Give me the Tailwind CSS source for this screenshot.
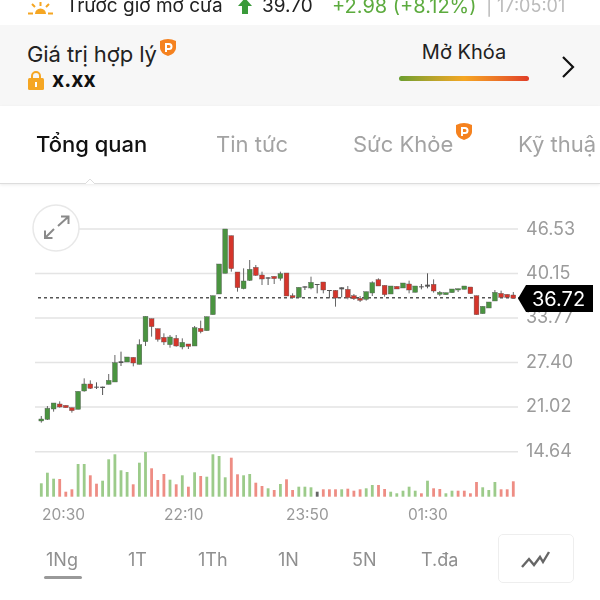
<!DOCTYPE html>
<html lang="vi">
<head>
<meta charset="utf-8">
<script src="https://cdn.jsdelivr.net/npm/@tailwindcss/browser@4"></script>
</head>
<body class="bg-white font-['Inter','Noto_Sans',sans-serif]">
<div class="w-[600px] h-[600px] overflow-hidden flex flex-col blur-[0.4px]">

  <div class="h-[25px] shrink-0 overflow-hidden flex items-center pl-[27px] text-[19px] leading-none whitespace-nowrap -translate-y-[7px]">
    <svg width="26" height="20" viewBox="0 0 26 20" class="shrink-0 translate-y-[4px]">
      <path d="M8 14a5.500 5.500 0 0 1 11 0z" fill="#f5a623"/>
      <rect x="1" y="12.500" width="5" height="2" fill="#f5a623"/><rect x="21" y="12.500" width="5" height="2" fill="#f5a623"/>
      <path d="M5 4l3 3M22 4l-3 3M13.500 2v4" stroke="#f5a623" stroke-width="2"/>
    </svg>
    <span class="ml-[13px] w-[160px] text-[#222]">Trước giờ mở cửa</span>
    <svg width="16" height="18" viewBox="0 0 16 18" class="shrink-0 ml-[11px]"><path d="M8 1l7 8h-4v8H5V9H1z" fill="#3a9a3a"/></svg>
    <span class="ml-[9px] text-[#222] w-[70px]">39.70</span>
    <span class="text-[#5cab3e] w-[154px] text-[20px]">+2.98 (+8.12%)</span>
    <span class="text-[#bbb] w-[11px]">|</span>
    <span class="text-[#bbb] text-[18px]">17:05:01</span>
  </div>

  <div class="h-[81px] shrink-0 bg-[#f7f7f7] flex pl-[27px] pr-[24px]">
    <div class="w-[372px] pt-[14px]">
      <div class="flex items-start h-[30px]">
        <span class="text-[22px] leading-[30px] text-[#222] -tracking-[0.1px]">Giá trị hợp lý</span>
        <svg width="18" height="19" viewBox="0 0 18 19" class="ml-[2px] -mt-[1px]"><path d="M1 3q8-4 16 0v7q0 5-8 8-8-3-8-8z" fill="#f5821f"/><path d="M7 14V6h3a2.500 2.500 0 0 1 0 5H7" fill="none" stroke="#fff" stroke-width="2"/></svg>
      </div>
      <div class="flex items-center h-[24px] mt-[-1px]">
        <svg width="18" height="21" viewBox="0 0 18 21" class="shrink-0"><path d="M5 9V6a4 4 0 0 1 8 0v3" fill="none" stroke="#f5a623" stroke-width="2"/><rect x="1" y="8" width="16" height="12" rx="1.500" fill="#f5a623"/><rect x="8" y="12" width="2" height="5" fill="#fff"/></svg>
        <span class="ml-[7px] text-[21px] font-bold text-[#111]">x.xx</span>
      </div>
    </div>
    <div class="w-[130px] pt-[14px] flex flex-col items-center">
      <span class="text-[20px] leading-[26px] font-normal text-[#222]">Mở Khóa</span>
      <div class="mt-[11px] h-[5px] w-[130px] rounded-full bg-gradient-to-r from-[#6a9e30] via-[#f5a623] to-[#e03c28]"></div>
    </div>
    <div class="flex-1 flex justify-end items-start pt-[30px]">
      <svg width="16" height="24" viewBox="0 0 16 24"><path d="M3 2l10 10-10 10" fill="none" stroke="#111" stroke-width="2.200"/></svg>
    </div>
  </div>

  <div class="relative h-[78px] shrink-0 flex items-center pl-[37px] text-[22px] whitespace-nowrap border-b border-[#ddd] shadow-[0_1px_3px_rgba(0,0,0,0.08)] overflow-visible">
    <span class="font-medium text-[#111] w-[180px] -ml-[1px]">Tổng quan</span>
    <span class="text-[#a3a3a3] w-[137px]">Tin tức</span>
    <span class="text-[#a3a3a3] flex items-start w-[165px]">Sức Khỏe
      <svg width="18" height="19" viewBox="0 0 18 19" class="ml-[2px] -mt-[6px]"><path d="M1 3q8-4 16 0v7q0 5-8 8-8-3-8-8z" fill="#f5821f"/><path d="M7 14V6h3a2.500 2.500 0 0 1 0 5H7" fill="none" stroke="#fff" stroke-width="2"/></svg>
    </span>
    <span class="text-[#a3a3a3]">Kỹ thuậ</span>
    <div class="absolute left-[85px] bottom-[-1px] w-[10px] h-[6px]">
      <svg width="10" height="6" viewBox="0 0 10 6"><path d="M0 6l5-5 5 5" fill="#fff" stroke="#ddd"/></svg>
    </div>
  </div>

  <svg id="chart" width="600" height="346" viewBox="0 184 600 346" class="shrink-0 block">
    <g stroke="#e4e4e4" stroke-width="1.500">
      <path d="M79 229H518M35 273.600H518M35 318H518M35 362.600H518M35 407H518M35 451.700H518" fill="none"/>
    </g>
    <g fill="#9b9b9b" font-size="18">
      <text x="526" y="234.500">46.53</text>
      <text x="526" y="278.500">40.15</text>
      <text x="526" y="323">33.77</text>
      <text x="526" y="367.500">27.40</text>
      <text x="526" y="412">21.02</text>
      <text x="526" y="456.500">14.64</text>
    </g>
    <path d="M38 297.700H520" stroke="#555" stroke-width="1.500" stroke-dasharray="3 3"/>
    <g id="candles"></g>
    <g id="vols"></g>
    <circle cx="56" cy="228" r="23" fill="#fff" stroke="#e8e8e8" stroke-width="1.500"/>
    <path d="M58 226l10-9M61 216.500h7.500v7.500M54 229l-9 9M45 230.500v7.500h7.500" fill="none" stroke="#8a8a8a" stroke-width="2"/>
    <path d="M518 298.500l8-13.500h67v27h-67z" fill="#000"/>
    <text x="532" y="305.500" fill="#fff" font-size="20">36.72</text>
    <g fill="#999" font-size="15.500">
      <text x="42" y="520">20:30</text>
      <text x="164" y="520">22:10</text>
      <text x="286" y="520">23:50</text>
      <text x="408" y="520">01:30</text>
    </g>
  </svg>

  <div class="relative flex-1 flex items-start text-[18px] text-[#8f8f8f] whitespace-nowrap pt-[19px]">
    <span class="ml-[46px] w-[82px] leading-[22px]">1Ng</span>
    <span class="w-[70px] leading-[22px]">1T</span>
    <span class="w-[80px] leading-[22px]">1Th</span>
    <span class="w-[74px] leading-[22px]">1N</span>
    <span class="w-[69px] leading-[22px]">5N</span>
    <span class="w-[77px] leading-[22px]">T.đa</span>
    <div class="w-[76px] h-[49px] -mt-[15px] border border-[#eee] rounded-[5px] flex items-center justify-center">
      <svg width="30" height="20" viewBox="0 0 30 20"><path d="M1 18l7-8 5 6 6-8 3 5 6-10" fill="none" stroke="#666" stroke-width="2.400"/></svg>
    </div>
    <div class="absolute left-[44px] top-[46px] w-[38px] h-[3px] bg-[#999] rounded-sm"></div>
  </div>
</div>
<script>
var G="#4a9440",R="#d5352b",D="#555";
var z2=function(y){return 200+y/3},z3=function(y){return 210+y/3};
var c=[
[G,657,663,648,668],[G,625,658,618,660],[G,609,627,609,635],[R,612,621,604,623],[R,616,623,616,623],[R,623,632,623,638],[G,574,628,574,628],[G,552,573,535,575],[R,552,565,541,567],[D,560,563,547,567],[D,560,564,560,585],[G,541,553,522,553],[G,488,546,465,546],[D,484,489,455,498],[G,471,486,471,486],[R,472,489,472,499],[G,434,493,418,493],[G,349,425,349,438],[R,356,380,356,410],[R,386,418,386,425],[R,412,426,400,435],[G,411,434,405,443],[R,415,438,405,440],[G,427,441,415,448],[R,432,439,432,447],[G,383,438,378,438],[R,385,395,362,400],[G,350,392,350,392],[G,287,344,287,344],[G,192,282,192,282],[G,87,220,87,220],[R,107,206,107,215],[R,216,263,216,275],[G,243,266,205,268],[G,208,241,180,243],[R,202,226,195,228]
];
var d=[
[R,195,207,185,225],[D,202,206,202,225],[R,199,206,199,222],[G,191,205,185,212],[R,189,258,189,258],[R,257,263,250,265],[G,232,262,232,262],[D,229,233,229,240],[G,217,234,200,238],[D,222,225,222,250],[R,216,240,216,250],[D,240,243,240,265],[R,241,264,240,290],[D,232,238,232,262],[R,238,263,228,268],[R,257,266,252,270],[R,265,271,258,276],[G,245,268,245,272],[G,218,249,214,258],[R,209,228,205,228],[R,226,254,226,260],[G,228,252,228,252],[R,229,237,229,237],[G,219,234,219,234],[R,222,240,212,250],[G,228,247,228,247],[D,229,232,222,238],[D,224,230,190,235],[R,223,243,208,248],[G,247,253,243,258],[G,248,254,248,254],[G,237,248,237,248],[G,236,240,236,246],[G,228,238,228,238],[R,231,251,231,251],[R,257,314,257,314],[G,289,311,289,311],[G,276,294,276,294],[G,247,273,240,273],[R,250,262,242,262],[R,253,262,253,262],[R,255,265,246,265]
];
var s="";
function draw(a,f,st){a.forEach(function(k,i){
  var x=(41.3+6.13*(i+st)).toFixed(1),y1=f(k[1]),y2=f(k[2]),w1=f(k[3]),w2=f(k[4]);
  var wc=k[0]==D?"#555":"#666";
  s+='<line x1="'+x+'" x2="'+x+'" y1="'+w1+'" y2="'+w2+'" stroke="'+wc+'" stroke-width="1"/>';
  s+='<rect x="'+(x-2.4)+'" y="'+y1+'" width="4.800" height="'+Math.max(y2-y1,1)+'" fill="'+k[0]+'"'+(k[0]==D?'':' stroke="#555" stroke-width="0.400"')+'/>';
});}
draw(c,z2,0);draw(d,z3,36);
document.getElementById("candles").innerHTML=s;
var g="#9ccb8a",r="#ee8d84",b="#666";
var v=[[g,130],[g,98],[g,116],[r,117],[r,155],[r,148],[g,72],[g,72],[r,106],[r,131],[g,122],[g,58],[g,43],[g,91],[g,96],[r,133],[g,68],[g,36],[r,85],[r,120],[r,102],[g,119],[r,133],[g,106],[r,140],[g,97],[r,108],[g,110],[g,43],[g,48],[g,112],[r,53],[r,103],[g,106],[g,102],[r,128],[r,138],[g,145],[r,150],[g,132],
[r,118],[r,150],[g,140],[g,140],[g,142],[b,155],[r,148],[r,148],[r,148],[g,148],[r,146],[r,152],[r,148],[g,145],[g,135],[r,135],[r,147],[g,155],[g,160],[g,152],[g,140],[g,152],[r,160],[g,122],[r,145],[r,147],[g,160],[g,152],[r,152],[r,152],[r,160],[r,126],[g,142],[g,150],[g,126],[r,148],[r,148],[r,124]];
var t="";
v.forEach(function(k,i){var x=41.3+6.13*i-1.4,y=440+k[1]/3;t+='<rect x="'+x.toFixed(1)+'" y="'+y.toFixed(1)+'" width="2.800" height="'+(496.7-y).toFixed(1)+'" fill="'+k[0]+'"/>';});
document.getElementById("vols").innerHTML=t;
</script>
</body>
</html>
